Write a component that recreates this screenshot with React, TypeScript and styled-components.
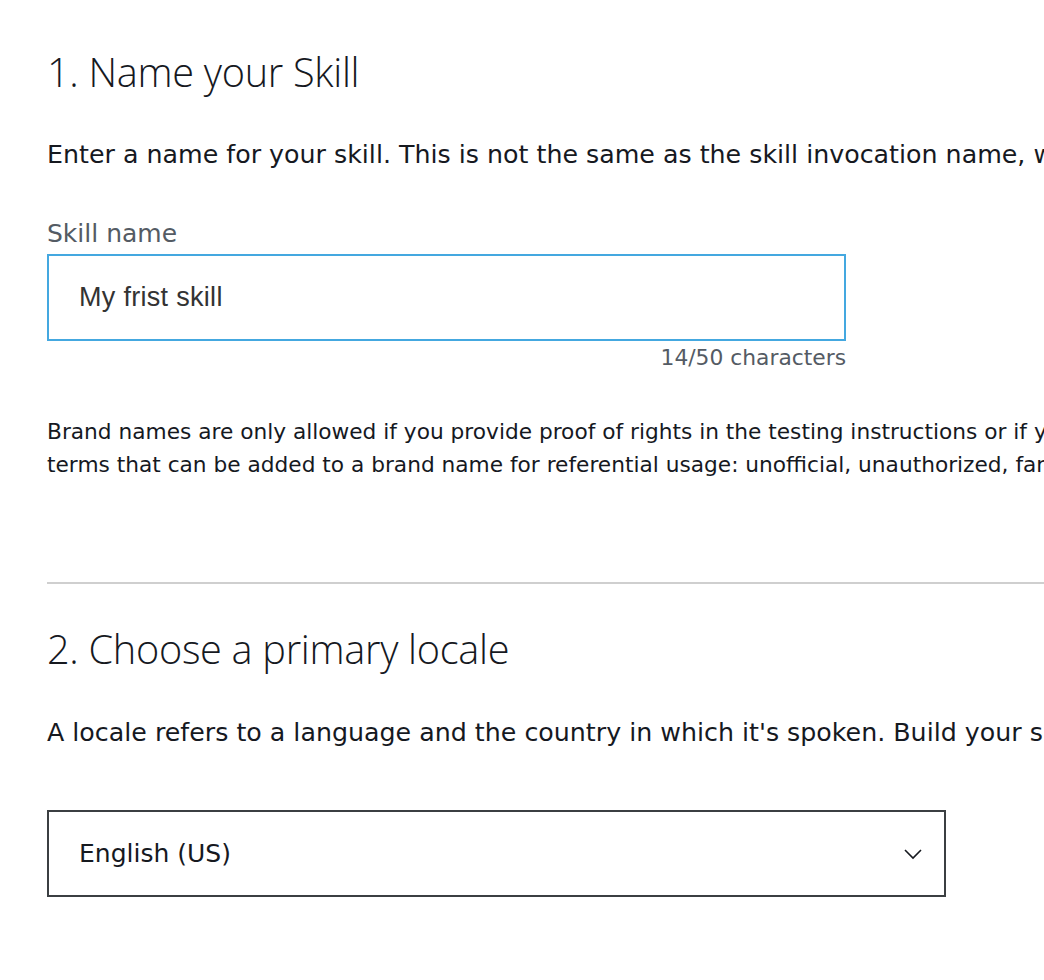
import React from "react";
import styled, { createGlobalStyle } from "styled-components";

const Global = createGlobalStyle`
  html, body { margin: 0; padding: 0; background: #ffffff; overflow: hidden; }
  body { font-family: "DejaVu Sans", "Open Sans", sans-serif; color: #16191f; }
`;

const Page = styled.main`
  width: 1500px;
  padding: 46px 0 0 47px;
  box-sizing: border-box;
`;

const Section = styled.section`
  display: flex;
  flex-direction: column;
`;

const Heading = styled.h2<{ $top?: number }>`
  margin: ${(p) => p.$top ?? 0}px 0 0;
  font-family: "Open Sans", sans-serif;
  font-weight: 300;
  font-size: 39.7px;
  line-height: 52px;
  color: #16191f;
  letter-spacing: -0.3px;
  white-space: nowrap;
`;

const Lead = styled.p<{ $top: number }>`
  margin: ${(p) => p.$top}px 0 0;
  font-size: 25.3px;
  line-height: 32px;
  white-space: nowrap;
  color: #16191f;
`;

const Label = styled.label`
  margin-top: 47px;
  font-size: 25px;
  line-height: 32px;
  color: #545b64;
`;

const FieldBox = styled.div`
  margin-top: 4px;
  width: 799px;
  height: 87px;
  box-sizing: border-box;
  border: 2px solid #44a8e0;
  display: flex;
  align-items: center;
  padding-left: 30px;
`;

const FieldText = styled.span`
  font-family: "Liberation Sans", Arial, sans-serif;
  font-size: 27px;
  color: #333333;
  letter-spacing: 0.3px;
`;

const Counter = styled.div`
  width: 799px;
  text-align: right;
  font-size: 21.8px;
  line-height: 34px;
  color: #545b64;
`;

const Note = styled.p`
  margin: 40px 0 0;
  font-size: 21.7px;
  line-height: 33px;
  white-space: nowrap;
  color: #16191f;
`;

const Divider = styled.hr`
  margin: 101px 0 0;
  border: 0;
  border-top: 2px solid #cfcfcf;
  width: 100%;
`;

const Select = styled.div`
  margin-top: 61px;
  width: 899px;
  height: 87px;
  box-sizing: border-box;
  border: 2px solid #3b3f42;
  display: flex;
  align-items: center;
  justify-content: space-between;
  padding: 0 22px 0 30px;
`;

const SelectText = styled.span`
  font-size: 25px;
  color: #16191f;
`;

const Chevron = () => (
  <svg width="18" height="12" viewBox="0 0 18 12" fill="none">
    <path d="M1 2 L9 10 L17 2" stroke="#16191f" strokeWidth="1.6" />
  </svg>
);

export default function App() {
  return (
    <>
      <Global />
      <Page>
        <Section>
          <Heading>1. Name your Skill</Heading>
          <Lead $top={41}>
            Enter a name for your skill. This is not the same as the skill invocation name, which is what customers say to open your skill.
          </Lead>
          <Label>Skill name</Label>
          <FieldBox>
            <FieldText>My frist skill</FieldText>
          </FieldBox>
          <Counter>14/50 characters</Counter>
          <Note>
            Brand names are only allowed if you provide proof of rights in the testing instructions or if your skill is an unofficial skill. Use one of these
            <br />
            terms that can be added to a brand name for referential usage: unofficial, unauthorized, fan, or for fans.
          </Note>
        </Section>
        <Divider />
        <Section>
          <Heading $top={39}>2. Choose a primary locale</Heading>
          <Lead $top={42}>
            A locale refers to a language and the country in which it's spoken. Build your skill in one locale first, then add more later.
          </Lead>
          <Select>
            <SelectText>English (US)</SelectText>
            <Chevron />
          </Select>
        </Section>
      </Page>
    </>
  );
}
